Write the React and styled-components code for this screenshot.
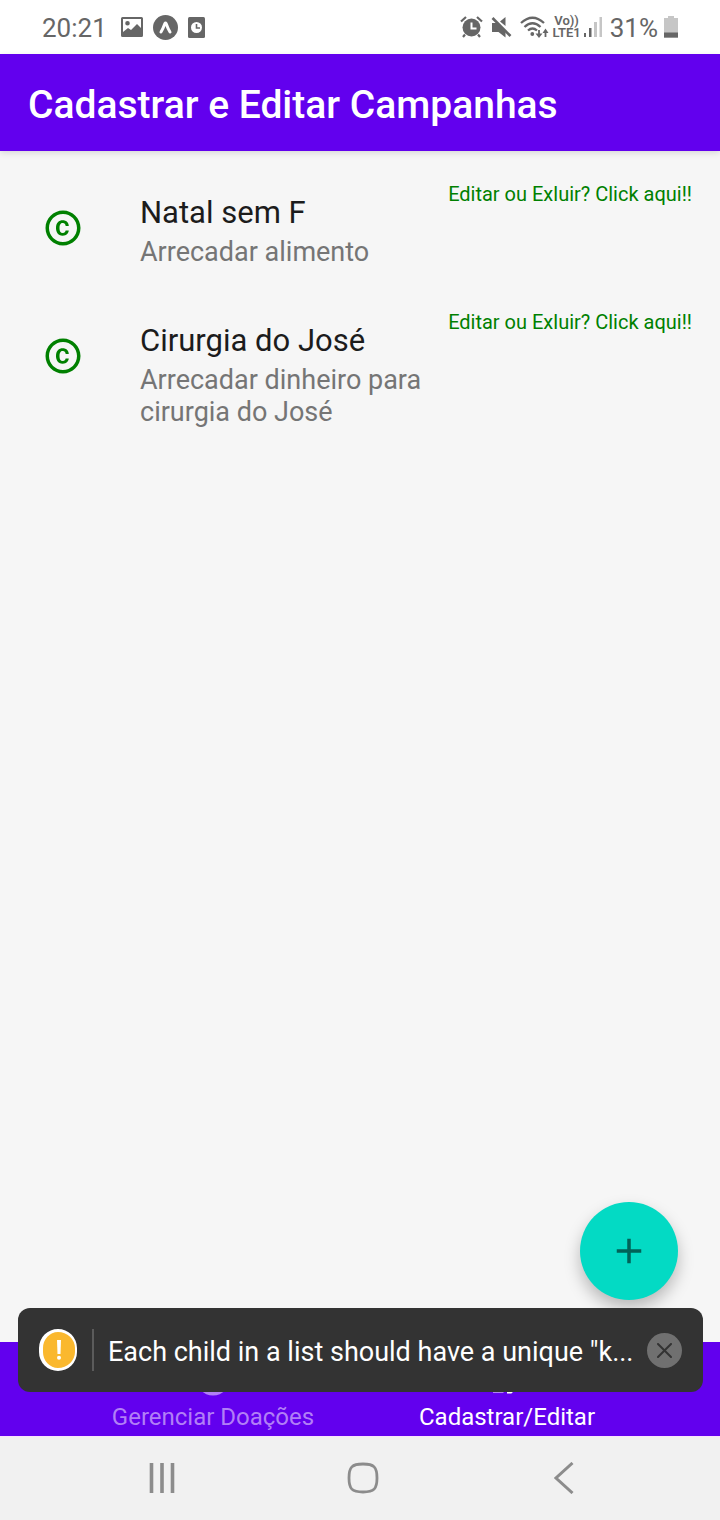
import React from "react";
import styled, { createGlobalStyle } from "styled-components";
import { MdCopyright } from "react-icons/md";

const GlobalStyle = createGlobalStyle`
  * { box-sizing: border-box; }
  body {
    margin: 0;
    background: #f6f6f6;
    font-family: Roboto, "Liberation Sans", sans-serif;
  }
  button { border: 0; padding: 0; background: none; font: inherit; cursor: pointer; }
  svg { display: block; flex: none; }
`;

const Screen = styled.div`
  display: flex;
  flex-direction: column;
  min-height: 100vh;
`;

const StatusBar = styled.div`
  display: flex;
  justify-content: space-between;
  align-items: center;
  height: 54px;
  padding: 0 42px;
  background: #fff;
  color: #666;
  font-size: 26px;
  line-height: 32px;
`;

const StatusGroup = styled.div`
  display: flex;
  align-items: center;
  gap: ${(p) => p.$gap}px;
`;

const StatusText = styled.span`
  padding-top: 2px;
`;

const Header = styled.header`
  display: flex;
  align-items: center;
  height: 97px;
  padding: 4px 28px 0;
  background: #6200ee;
  color: #fff;
  box-shadow: 0 2px 6px rgba(0, 0, 0, 0.12);
`;

const PageTitle = styled.h1`
  margin: 0;
  font-size: 39px;
  font-weight: 500;
  line-height: 48px;
`;

const AppArea = styled.div`
  position: relative;
  display: flex;
  flex: 1;
  flex-direction: column;
`;

const Content = styled.main`
  position: relative;
  flex: 1;
`;

const CampaignList = styled.ul`
  margin: 0;
  padding: 14px 0;
  list-style: none;
`;

const CampaignRow = styled.li`
  display: flex;
  align-items: flex-start;
  min-height: 128px;
  padding: 14px 28px;
`;

const CampaignIcon = styled.div`
  display: flex;
  justify-content: center;
  width: 70px;
  margin-right: 42px;
  padding-top: 28px;
  color: #008000;
`;

const CampaignText = styled.div`
  flex: 1;
  padding: 14px 16px 10px 0;
`;

const CampaignName = styled.h2`
  margin: 0 0 3px;
  color: #1c1c1c;
  font-size: 31px;
  font-weight: 400;
  line-height: 40px;
`;

const CampaignDescription = styled.p`
  margin: 0;
  color: #757575;
  font-size: 27px;
  line-height: 32px;
`;

const EditButton = styled.button`
  color: #008000;
  font-size: 20px;
  line-height: 30px;
  white-space: nowrap;
`;

const AddButton = styled.button`
  position: absolute;
  right: 42px;
  bottom: 42px;
  display: flex;
  align-items: center;
  justify-content: center;
  width: 98px;
  height: 98px;
  border-radius: 50%;
  background: #03dac4;
  color: #016257;
  box-shadow: 0 8px 16px rgba(0, 0, 0, 0.25);
`;

const TabBar = styled.nav`
  display: flex;
  justify-content: center;
  height: 94px;
  padding: 0 66px;
  background: #6200ee;
`;

const Tab = styled.button`
  display: flex;
  flex: 1;
  flex-direction: column;
  align-items: center;
  justify-content: flex-end;
  gap: 4px;
  padding-bottom: 5px;
  color: ${(p) => (p.$active ? "#fff" : "#b17ff6")};
  font-size: 24px;
  line-height: 28px;
`;

const Toast = styled.div`
  position: absolute;
  right: 17px;
  bottom: 44px;
  left: 18px;
  display: flex;
  align-items: center;
  height: 84px;
  padding: 0 21px;
  border-radius: 12px;
  background: #333;
  color: #fff;
`;

const WarningBadge = styled.div`
  display: flex;
  align-items: center;
  justify-content: center;
  flex: none;
  width: 38px;
  height: 42px;
  border: solid #fff;
  border-width: 3px 2px 3px 4px;
  border-radius: 19px;
  background: #fab82e;
`;

const Divider = styled.div`
  flex: none;
  width: 2px;
  height: 42px;
  margin: 0 14px 0 15px;
  background: #5b5b5b;
`;

const ToastMessage = styled.p`
  flex: 1;
  min-width: 0;
  margin: 0 10px 0 0;
  padding-top: 4px;
  overflow: hidden;
  font-size: 27px;
  line-height: 32px;
  text-overflow: ellipsis;
  white-space: nowrap;
`;

const DismissButton = styled.button`
  display: flex;
  align-items: center;
  justify-content: center;
  flex: none;
  width: 35px;
  height: 35px;
  border-radius: 50%;
  background: #707070;
`;

const SystemBar = styled.footer`
  display: flex;
  align-items: center;
  justify-content: space-around;
  height: 84px;
  padding: 0 55px 2px 61px;
  border-top: 1px solid #fbe1ff;
  background: #f1f1f1;
`;

const SystemButton = styled.button`
  display: flex;
  justify-content: center;
  width: 80px;
`;

const ImageIcon = () => (
  <svg width="22" height="20" viewBox="0 0 22 20" aria-hidden="true">
    <path fill="#666" fillRule="evenodd" d="M1.5 0h19A1.5 1.5 0 0 1 22 1.500v17a1.500 1.500 0 0 1-1.500 1.500h-19A1.500 1.500 0 0 1 0 18.500v-17A1.500 1.500 0 0 1 1.500 0ZM2 2v13l5-4 3 2 6-6 4 4V2ZM6.500 4a2.300 2.300 0 1 1 0 4.600 2.300 2.300 0 0 1 0-4.600Z" />
  </svg>
);

const ExpoIcon = () => (
  <svg width="25" height="25" viewBox="0 0 25 25" aria-hidden="true">
    <circle cx="12.500" cy="12.500" r="12.500" fill="#666" />
    <path fill="none" stroke="#fff" strokeWidth="3" strokeLinecap="round" strokeLinejoin="round" d="M8 17C9.800 14.300 10.800 11.500 11.900 8.500q.6-1 1.200 0C14.200 11.500 15.200 14.300 17 17" />
  </svg>
);

const ClockCardIcon = () => (
  <svg width="17" height="21" viewBox="0 0 17 21" aria-hidden="true">
    <rect width="17" height="21" rx="1.500" fill="#666" />
    <circle cx="8.500" cy="10.500" r="5.500" fill="#fff" />
    <path d="M8.500 7v4H12" fill="none" stroke="#666" strokeWidth="1.600" />
  </svg>
);

const AlarmIcon = () => (
  <svg width="23" height="22" viewBox="0 0 23 22" aria-hidden="true">
    <circle cx="11.500" cy="11.500" r="9" fill="#666" />
    <path d="M11.500 6.500v6h5" fill="none" stroke="#fff" strokeWidth="2" />
    <path d="M1 5.500 6 1M22 5.500 17 1M5 18.500 3 21M18 18.500l2 2.500" fill="none" stroke="#666" strokeWidth="2.200" />
  </svg>
);

const MuteIcon = () => (
  <svg width="21" height="22" viewBox="0 0 21 22" aria-hidden="true">
    <path d="M1 7h5.500l8 8v6.500L7.500 16H1ZM14.500 1v9L9 5.500Z" fill="#666" />
    <path d="M1.500 2 19.500 20" stroke="#666" strokeWidth="2.600" />
  </svg>
);

const WifiIcon = () => (
  <svg width="29" height="23" viewBox="0 0 29 23" aria-hidden="true">
    <g fill="none" stroke="#666" strokeWidth="2.300">
      <path d="M1 7Q12.500-3.500 24 7" />
      <path d="M4.500 11Q12.500 3.500 20.500 11" />
      <path d="M8 14.500Q12.500 10.500 17 14.500" />
      <path d="M19 14v6M25.500 21v-6" strokeWidth="1.800" />
    </g>
    <circle cx="12.300" cy="18" r="1.900" fill="#666" />
    <path d="M15.500 17.500h7L19 22ZM22.500 17h6L25.500 12.500Z" fill="#666" />
  </svg>
);

const NetworkLabel = styled.div`
  display: flex;
  flex-direction: column;
  align-items: center;
  font-size: 13px;
  font-weight: 600;
  line-height: 12px;
`;

const SignalIcon = () => (
  <svg width="18" height="20" viewBox="0 0 18 20" aria-hidden="true">
    <path d="M0 16h2v4H0ZM5 11h2.500v9H5Z" fill="#666" />
    <path d="M10 5h3v15h-3ZM15.500 0H18v20h-2.500Z" fill="#c6c6c6" />
  </svg>
);

const BatteryIcon = () => (
  <svg width="14" height="22" viewBox="0 0 14 22" aria-hidden="true">
    <path d="M4 0h6v2h4v20H0V2h4Z" fill="#c6c6c6" />
    <path d="M0 16.500h14V21.500H0Z" fill="#666" />
  </svg>
);

const DonationIcon = () => (
  <svg width="42" height="42" viewBox="0 0 24 24" aria-hidden="true">
    <circle cx="12" cy="12" r="10" fill="currentColor" />
  </svg>
);

const ListEditIcon = () => (
  <svg width="42" height="42" viewBox="0 0 24 24" aria-hidden="true">
    <path fill="currentColor" d="M3 6h14v2H3ZM3 10h10v2H3ZM3 14h6v2H3ZM12 18.500l7-7 2.500 2.500-7 6.800H12Z" />
    <path fill="currentColor" opacity="0.500" d="M4 18h6v2.600H4Z" />
  </svg>
);

const campaigns = [
  { name: "Natal sem F", description: "Arrecadar alimento" },
  { name: "Cirurgia do José", description: "Arrecadar dinheiro para cirurgia do José" },
];

export default function App() {
  return (
    <Screen>
      <GlobalStyle />
      <StatusBar>
        <StatusGroup $gap={14}>
          <StatusText>20:21</StatusText>
          <StatusGroup $gap={10}>
            <ImageIcon />
            <ExpoIcon />
            <ClockCardIcon />
          </StatusGroup>
        </StatusGroup>
        <StatusGroup $gap={8}>
          <AlarmIcon />
          <MuteIcon />
          <StatusGroup $gap={3}>
            <WifiIcon />
            <NetworkLabel>
              <span>Vo))</span>
              <span>LTE1</span>
            </NetworkLabel>
            <SignalIcon />
          </StatusGroup>
          <StatusGroup $gap={6}>
            <StatusText>31%</StatusText>
            <BatteryIcon />
          </StatusGroup>
        </StatusGroup>
      </StatusBar>
      <Header>
        <PageTitle>Cadastrar e Editar Campanhas</PageTitle>
      </Header>
      <AppArea>
        <Content>
          <CampaignList>
            {campaigns.map((c) => (
              <CampaignRow key={c.name}>
                <CampaignIcon>
                  <MdCopyright size={42} aria-hidden="true" />
                </CampaignIcon>
                <CampaignText>
                  <CampaignName>{c.name}</CampaignName>
                  <CampaignDescription>{c.description}</CampaignDescription>
                </CampaignText>
                <EditButton>Editar ou Exluir? Click aqui!!</EditButton>
              </CampaignRow>
            ))}
          </CampaignList>
          <AddButton aria-label="Adicionar campanha">
            <svg width="42" height="42" viewBox="0 0 24 24" aria-hidden="true">
              <path fill="currentColor" d="M19 13h-6v6h-2v-6H5v-2h6V5h2v6h6v2Z" />
            </svg>
          </AddButton>
        </Content>
        <TabBar>
          <Tab>
            <DonationIcon />
            <span>Gerenciar Doações</span>
          </Tab>
          <Tab $active aria-current="page">
            <ListEditIcon />
            <span>Cadastrar/Editar</span>
          </Tab>
        </TabBar>
        <Toast role="alert">
          <WarningBadge>
            <svg width="6" height="20" viewBox="0 0 6 20" aria-hidden="true">
              <path d="M1 0h4l-.5 14h-3Z" fill="#fff" />
              <circle cx="3" cy="17.800" r="2" fill="#fff" />
            </svg>
          </WarningBadge>
          <Divider />
          <ToastMessage>Each child in a list should have a unique "k...</ToastMessage>
          <DismissButton aria-label="Dispensar">
            <svg width="15" height="15" viewBox="0 0 15 15" aria-hidden="true">
              <path d="m1 1 13 13M14 1 1 14" stroke="#333" strokeWidth="2" strokeLinecap="round" />
            </svg>
          </DismissButton>
        </Toast>
      </AppArea>
      <SystemBar>
        <SystemButton aria-label="Recentes">
          <svg width="26" height="30" viewBox="0 0 26 30" aria-hidden="true">
            <path d="M2.500 0v30M13 0v30M23.500 0v30" stroke="#8c8c8c" strokeWidth="3.600" />
          </svg>
        </SystemButton>
        <SystemButton aria-label="Início">
          <svg width="32" height="32" viewBox="0 0 32 32" aria-hidden="true">
            <path d="M16 2C27 2 30 5 30 16S27 30 16 30 2 27 2 16 5 2 16 2Z" fill="none" stroke="#8c8c8c" strokeWidth="2.800" />
          </svg>
        </SystemButton>
        <SystemButton aria-label="Voltar">
          <svg width="20" height="32" viewBox="0 0 20 32" aria-hidden="true">
            <path d="M18.500 1 2 16l16.500 15" fill="none" stroke="#8c8c8c" strokeWidth="3" />
          </svg>
        </SystemButton>
      </SystemBar>
    </Screen>
  );
}
